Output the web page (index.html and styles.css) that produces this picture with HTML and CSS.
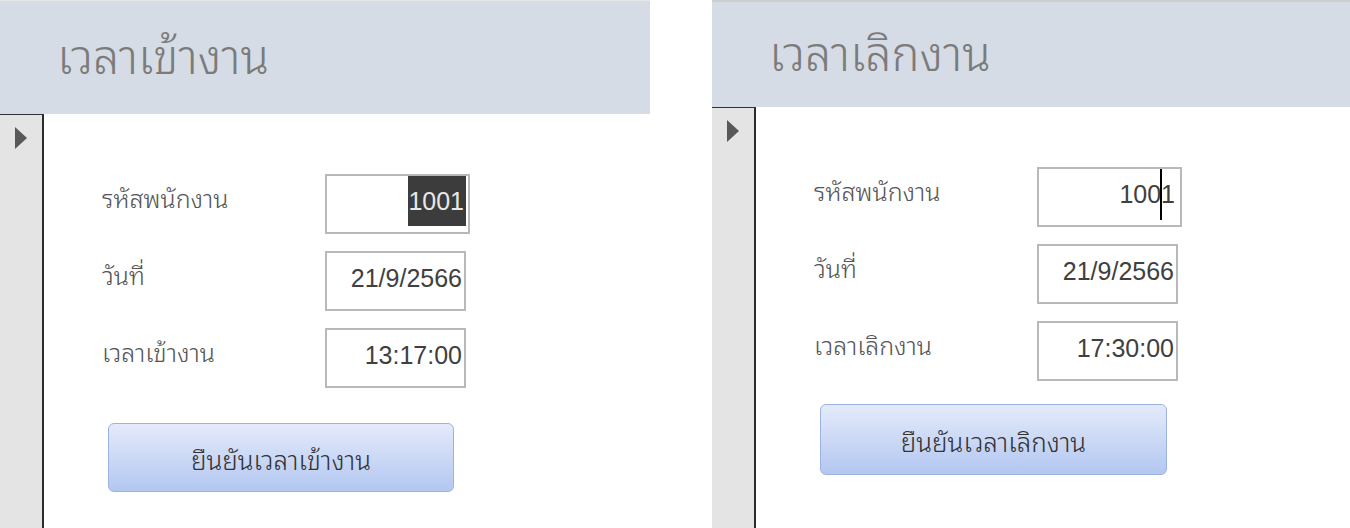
FILE: index.html
```html
<!DOCTYPE html>
<html lang="th">
  <head>
    <meta charset="UTF-8" />
    <meta name="viewport" content="width=device-width, initial-scale=1.0" />
    <title>เวลาเข้างาน / เวลาเลิกงาน</title>
    <link rel="stylesheet" href="styles.css">
  </head>

  <body>
    <div class="screen">
      <!-- ฟอร์มเวลาเข้างาน -->
      <section class="panel panel-in">
        <header class="panel-head">
          <h1>เวลาเข้างาน</h1>
        </header>
        <div class="panel-body">
          <div class="selector"><span class="arrow"></span></div>
          <form class="form">
            <div class="row">
              <label>รหัสพนักงาน</label>
              <div class="field field-wide"><span class="sel">1001</span></div>
            </div>
            <div class="row">
              <label>วันที่</label>
              <div class="field">21/9/2566</div>
            </div>
            <div class="row">
              <label>เวลาเข้างาน</label>
              <div class="field">13:17:00</div>
            </div>
            <button type="button" class="confirm">ยืนยันเวลาเข้างาน</button>
          </form>
        </div>
      </section>

      <!-- ฟอร์มเวลาเลิกงาน -->
      <section class="panel panel-out">
        <header class="panel-head">
          <h1>เวลาเลิกงาน</h1>
        </header>
        <div class="panel-body">
          <div class="selector"><span class="arrow"></span></div>
          <form class="form">
            <div class="row">
              <label>รหัสพนักงาน</label>
              <div class="field field-wide">100<span class="caret"></span>1</div>
            </div>
            <div class="row">
              <label>วันที่</label>
              <div class="field">21/9/2566</div>
            </div>
            <div class="row">
              <label>เวลาเลิกงาน</label>
              <div class="field">17:30:00</div>
            </div>
            <button type="button" class="confirm">ยืนยันเวลาเลิกงาน</button>
          </form>
        </div>
      </section>
    </div>
  </body>
</html>
```

FILE: styles.css
```css
* {
  margin: 0;
  padding: 0;
  box-sizing: border-box;
}

body {
  width: 1350px;
  height: 528px;
  overflow: hidden;
  background: #ffffff;
  font-family: "Noto Sans Thai Looped", "Loma", "Tahoma", "Noto Sans Thai", "Noto Sans Thai UI", "DejaVu Sans", sans-serif;
}

.screen {
  display: flex;
  gap: 62px;
  height: 528px;
}

.panel {
  display: flex;
  flex-direction: column;
}

.panel-in {
  width: 650px;
  border-top: 1px solid #e6e6e6;
}

.panel-out {
  width: 638px;
  border-top: 2px solid #cdcdcd;
}

.panel-head {
  display: flex;
  align-items: center;
  padding: 0 0 10px 57px;
  background: #d6dce5;
}

.panel-in .panel-head {
  height: 113px;
}

.panel-out .panel-head {
  height: 105px;
}

.panel-head h1 {
  font-size: 47px;
  font-weight: 300;
  color: #7b7b7b;
}

.panel-body {
  flex: 1;
  display: flex;
}

/* แถบเลือกเรคคอร์ดด้านซ้าย */
.selector {
  width: 44px;
  padding: 12px 0 0 15px;
  background: #e4e4e4;
  border-top: 1px solid #333333;
  border-right: 2px solid #2b2b2b;
}

.arrow {
  display: block;
  width: 0;
  height: 0;
  border-top: 11px solid transparent;
  border-bottom: 11px solid transparent;
  border-left: 12px solid #585858;
}

.form {
  padding: 60px 0 0 58px;
}

.row {
  display: grid;
  grid-template-columns: 223px auto;
  align-items: center;
}

.row + .row {
  margin-top: 17px;
}

.row label {
  padding-bottom: 14px;
  font-size: 25px;
  font-weight: 350;
  color: #555555;
}

.field {
  display: flex;
  justify-content: flex-end;
  align-items: flex-start;
  width: 141px;
  height: 60px;
  padding-right: 2px;
  border: 2px solid #b9b9b9;
  font-family: "Liberation Sans", Arial, sans-serif;
  font-size: 25px;
  line-height: 50px;
  color: #404040;
}

.field-wide {
  width: 145px;
  padding-right: 5px;
}

.sel {
  margin-right: -3px;
  padding: 0 2px 0 0;
  background: #3c3c3c;
  color: #e8e8e8;
}

.caret {
  width: 2px;
  height: 51px;
  margin: 0 -1px;
  background: #000000;
}

.confirm {
  display: block;
  width: 346px;
  height: 69px;
  margin: 35px 0 0 6px;
  border: 1px solid #9cb2e2;
  border-radius: 6px;
  background: linear-gradient(#e4eafa, #b3c7f1);
  font-family: inherit;
  font-size: 26px;
  font-weight: 350;
  color: #333333;
}

.panel-out .confirm {
  width: 347px;
  height: 71px;
  margin-top: 23px;
}
```
